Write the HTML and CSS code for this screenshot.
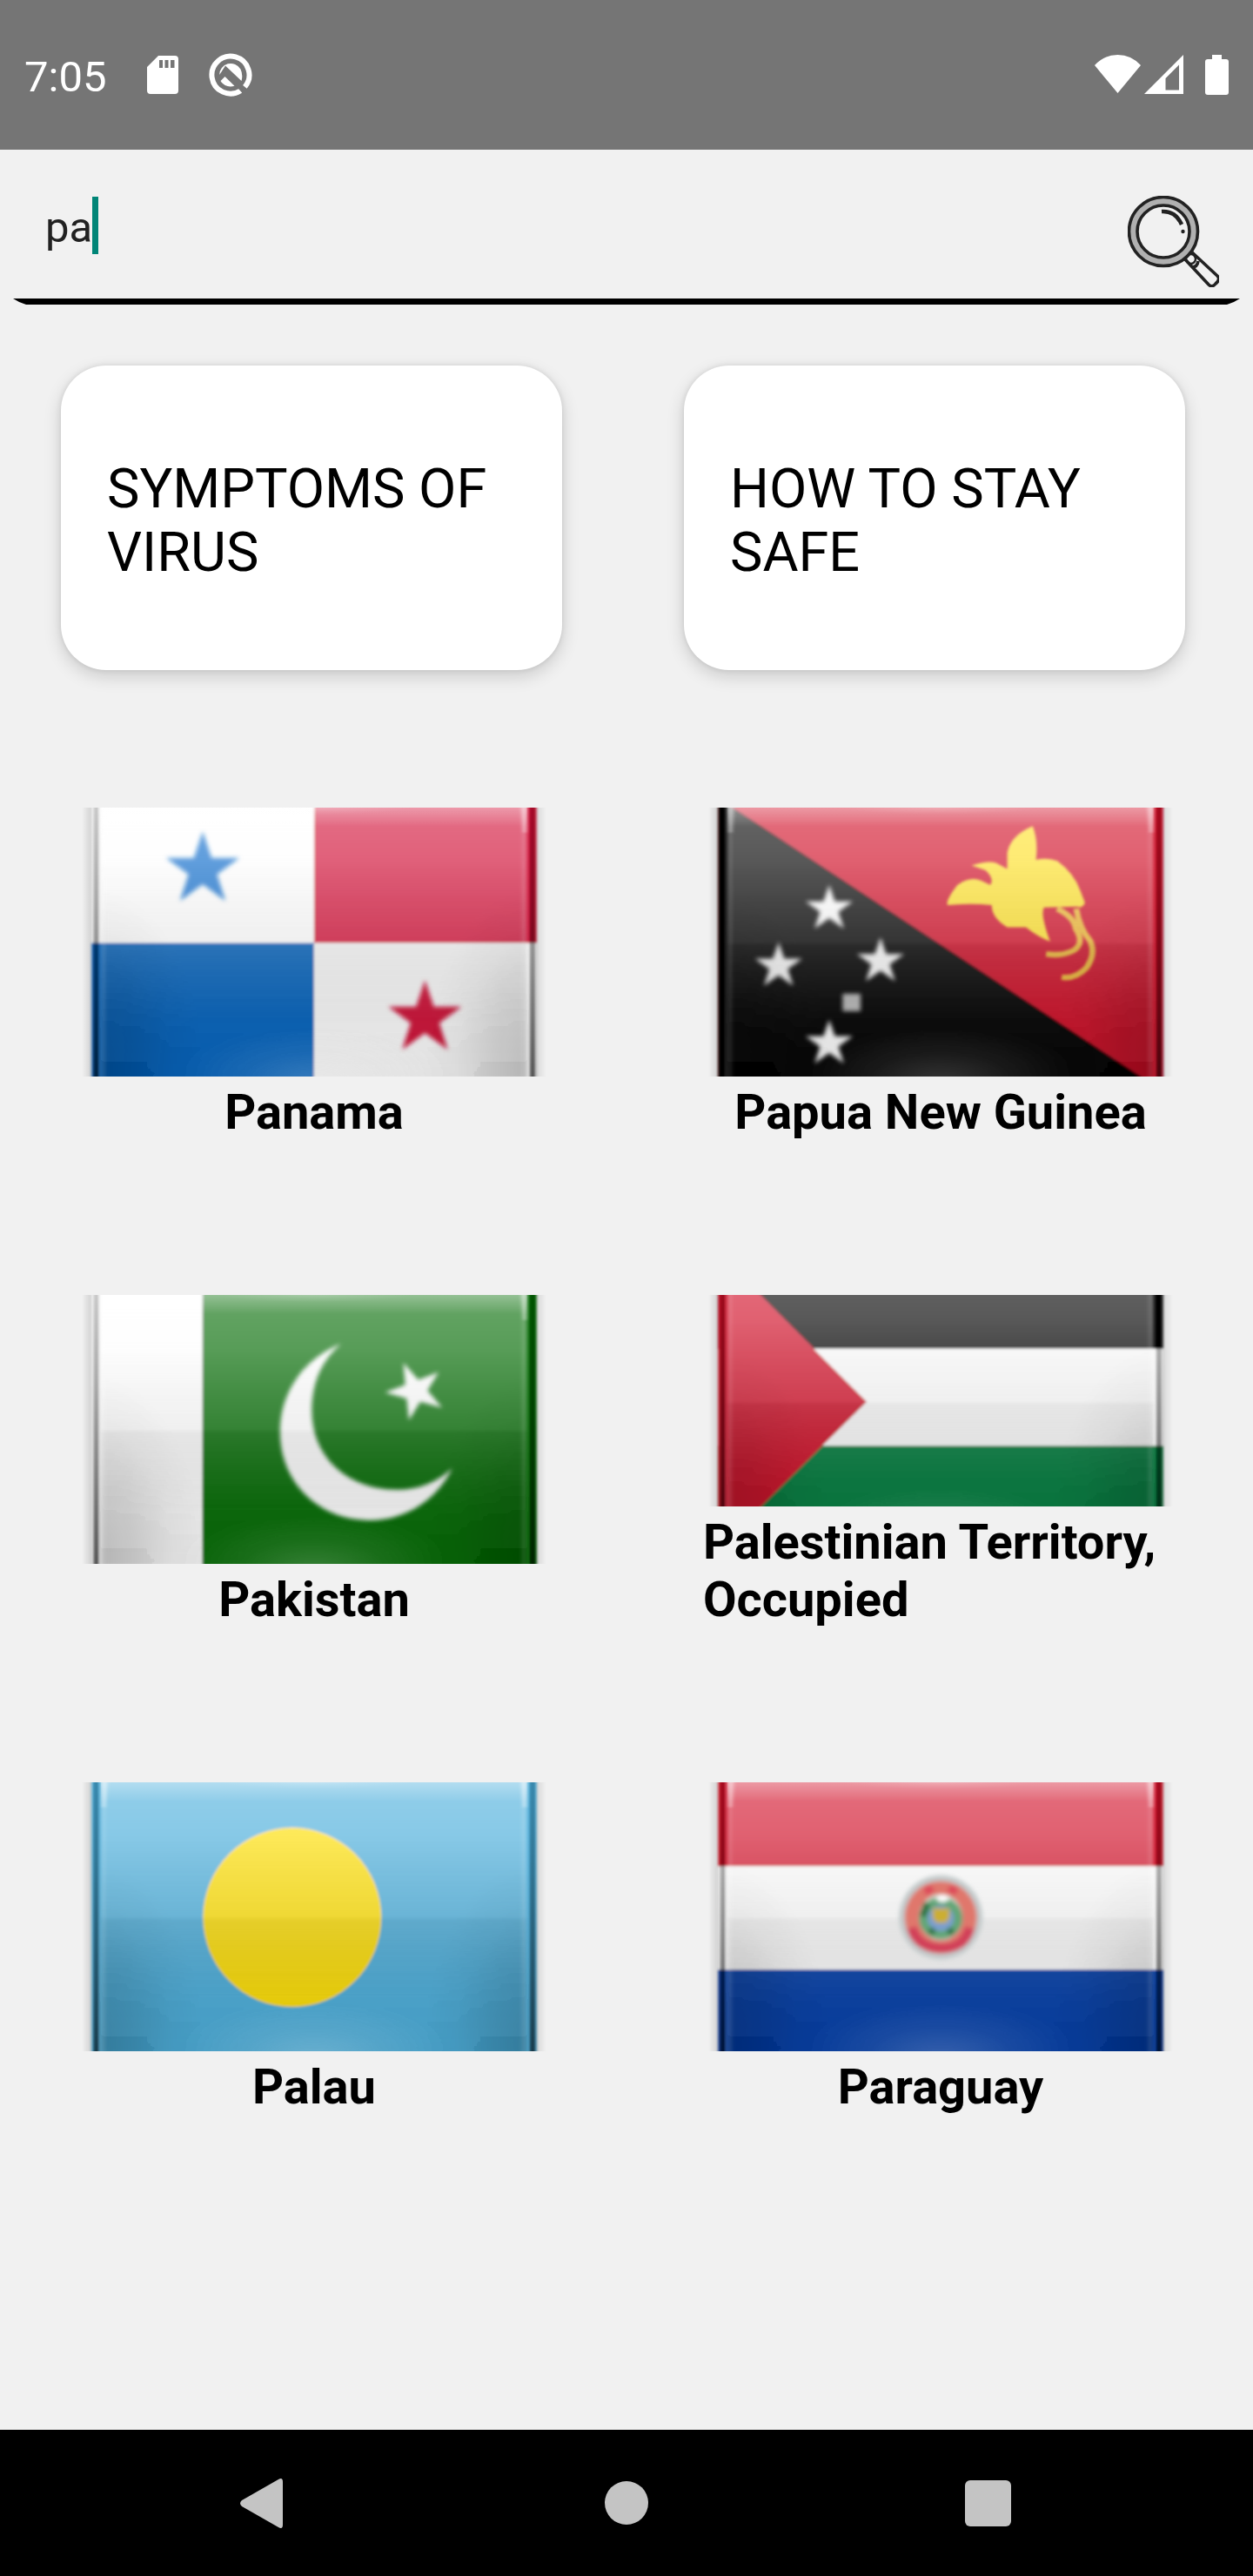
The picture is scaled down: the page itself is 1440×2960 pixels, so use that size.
FILE: index.html
```html
<!DOCTYPE html>
<html lang="en">
<head>
<meta charset="utf-8">
<title>Country search</title>
<link rel="stylesheet" href="styles.css">
</head>
<body>
<svg class="defs" aria-hidden="true">
  <defs>
    <filter id="soft" x="-5%" y="-5%" width="110%" height="110%"><feGaussianBlur stdDeviation="5"/></filter>
    <filter id="soft-edge" x="-5%" y="-5%" width="110%" height="110%"><feGaussianBlur stdDeviation="6 3"/></filter>
    <filter id="soft-small" x="-20%" y="-20%" width="140%" height="140%"><feGaussianBlur stdDeviation="8"/></filter>
    <linearGradient id="gloss" x1="0" y1="84" x2="0" y2="1016" gradientUnits="userSpaceOnUse">
      <stop offset="0" stop-color="#fff" stop-opacity=".4"/>
      <stop offset=".2" stop-color="#fafafa" stop-opacity=".35"/>
      <stop offset=".495" stop-color="#c7c7c7" stop-opacity=".267"/>
      <stop offset=".51" stop-color="#a0a0a0" stop-opacity=".263"/>
      <stop offset=".8" stop-color="#505050" stop-opacity=".15"/>
      <stop offset="1" stop-color="#232323" stop-opacity=".13"/>
    </linearGradient>
    <linearGradient id="top-shine" x1="0" y1="0" x2="0" y2="1">
      <stop offset="0" stop-color="#fff" stop-opacity=".3"/>
      <stop offset="1" stop-color="#fff" stop-opacity="0"/>
    </linearGradient>
    <linearGradient id="edge-dark" x1="0" y1="0" x2="0" y2="1">
      <stop offset="0" stop-color="#000" stop-opacity=".22"/>
      <stop offset=".35" stop-color="#000" stop-opacity=".4"/>
      <stop offset="1" stop-color="#000" stop-opacity=".85"/>
    </linearGradient>
    <linearGradient id="halo-l"><stop offset="0" stop-color="#000" stop-opacity="0"/><stop offset="1" stop-color="#000" stop-opacity=".13"/></linearGradient>
    <linearGradient id="halo-r"><stop offset="0" stop-color="#000" stop-opacity=".1"/><stop offset="1" stop-color="#000" stop-opacity="0"/></linearGradient>
    <radialGradient id="corner">
      <stop offset="0" stop-color="#000" stop-opacity=".19"/>
      <stop offset=".35" stop-color="#000" stop-opacity=".12"/>
      <stop offset=".7" stop-color="#000" stop-opacity=".035"/>
      <stop offset="1" stop-color="#000" stop-opacity="0"/>
    </radialGradient>
    <radialGradient id="glow">
      <stop offset="0" stop-color="#fff" stop-opacity=".2"/>
      <stop offset=".5" stop-color="#fff" stop-opacity=".08"/>
      <stop offset="1" stop-color="#fff" stop-opacity="0"/>
    </radialGradient>
    <clipPath id="inner"><rect x="98" y="-100" width="1374" height="1300"/></clipPath>
    <path id="star" d="M0-100 23-31 95-31 37 12 59 81 0 38-59 81-37 12-95-31-23-31Z"/>
    <g id="halo">
      <rect x="38" y="-20" width="32" height="1140" fill="url(#halo-l)"/>
      <rect x="1500" y="-20" width="33" height="1140" fill="url(#halo-r)"/>
    </g>
    <g id="shade">
      <g filter="url(#soft-edge)">
        <g clip-path="url(#inner)">
          <rect x="98" y="40" width="1374" height="1040" fill="url(#gloss)"/>
          <ellipse cx="90" cy="980" rx="340" ry="620" fill="url(#corner)"/>
          <ellipse cx="1480" cy="980" rx="340" ry="620" fill="url(#corner)"/>
          <ellipse cx="785" cy="1030" rx="460" ry="190" fill="url(#glow)"/>
        </g>
      </g>
      <g filter="url(#soft-edge)">
        <rect x="76" y="0" width="17" height="1100" fill="url(#edge-dark)"/>
        <rect x="1480" y="0" width="17" height="1100" fill="url(#edge-dark)"/>
        <rect x="100" y="40" width="14" height="1040" fill="#fff" fill-opacity=".12"/>
        <rect x="1454" y="40" width="14" height="1040" fill="#fff" fill-opacity=".12"/>
      </g>
    </g>
    <g id="shine">
      <rect x="100" y="84" width="1370" height="66" fill="url(#top-shine)"/>
      <ellipse cx="785" cy="82" rx="320" ry="26" fill="url(#glow)"/>
      <g filter="url(#soft-edge)">
        <path d="M100 60h22l-8 110h-10zM1472 60h-22l8 110h10z" fill="#fff" fill-opacity=".45"/>
      </g>
    </g>
  </defs>
</svg>

<header class="status">
  <span class="time">7:05</span>
  <svg class="sd" viewBox="0 0 36 44"><path fill="#fff" fill-rule="evenodd" d="M13 0H32Q36 0 36 4V40Q36 44 32 44H4Q0 44 0 40V13ZM14 5V14H18V5ZM20.500 5V14H24.500V5ZM27 5V14H31.500V5Z"/></svg>
  <svg class="q" viewBox="-25 -25 50 50">
    <path d="M11.500 18.200A21.500 21.500 0 1 1 16.400 13.900" fill="none" stroke="#fff" stroke-width="6"/>
    <path d="M-12.800 0A13 13 0 0 1 11.500-6.500Q14.500 0 12.500 7L-6-10.500Z" fill="#fff"/>
    <path d="M-13 3-6-4.500" stroke="#757575" stroke-width="3"/>
    <path d="M-6.500 2 4.500 12.800Q-6 15.500-11.500 7Z" fill="#fff"/>
    <path d="M5 10 13.500 18.500" stroke="#757575" stroke-width="3"/>
  </svg>
  <span class="spacer"></span>
  <svg class="wifi" viewBox="0 0 53 44"><path fill="#fff" d="M0 12Q11 0 26.500 0T53 12L26.500 44Z"/></svg>
  <svg class="signal" viewBox="0 0 45 45"><path fill="#fff" fill-rule="evenodd" d="M45 0V45H0ZM40 11.500 24.500 27V40.500H40Z"/></svg>
  <svg class="battery" viewBox="0 0 27 46"><path fill="#fff" d="M8 0H19V5H24Q27 5 27 8V43Q27 46 24 46H3Q0 46 0 43V8Q0 5 3 5H8Z"/></svg>
</header>

<main class="app">
  <div class="search">
    <div class="query"><span>pa</span><i class="caret"></i></div>
    <svg class="lens" viewBox="0 0 105 105" fill="none" stroke="#222" stroke-width="3.600">
      <circle cx="41" cy="41" r="35" stroke="#b0b0b0" stroke-width="8"/>
      <circle cx="41" cy="41" r="39.500"/>
      <circle cx="41" cy="41" r="30"/>
      <path d="M39 18Q55 17 62 33" stroke-width="4.500"/>
      <circle cx="63.500" cy="41" r="2.200" fill="#222" stroke="none"/>
      <path d="M65 72 93 102Q97 106 101 101Q107 96 103 92L74 65"/>
      <circle cx="72.500" cy="72.500" r="5.500" stroke-width="2.500"/>
      <path d="M74 82Q80 82 81 75"/>
    </svg>
  </div>
  <div class="underline"></div>

  <section class="cards">
    <article class="card">SYMPTOMS OF VIRUS</article>
    <article class="card">HOW TO STAY SAFE</article>
  </section>

  <section class="countries">
    <figure class="country">
      <svg class="flag" viewBox="38 84 1495 926" preserveAspectRatio="none">
        <use href="#halo"/>
        <g filter="url(#soft)">
          <rect x="70" y="0" width="1431" height="1100" fill="#fff"/>
          <rect x="785" y="0" width="716" height="550" fill="#d20e35"/>
          <rect x="70" y="550" width="715" height="550" fill="#0063c0"/>
        </g>
        <g filter="url(#soft-small)">
          <use href="#star" transform="translate(427 298) scale(1.240 1.320)" fill="#0a6ccc"/>
          <use href="#star" transform="translate(1142 810) scale(1.240 1.320)" fill="#d20e35"/>
        </g>
        <use href="#shade"/><use href="#shine"/>
      </svg>
      <figcaption>Panama</figcaption>
    </figure>

    <figure class="country">
      <svg class="flag" viewBox="38 84 1495 926" preserveAspectRatio="none">
        <use href="#halo"/>
        <g filter="url(#soft)">
          <rect x="70" y="0" width="1431" height="1100" fill="#d20c25"/>
          <path d="M70 0V1100H1570L1430 1010 120 84 70 48Z" fill="#000"/>
        </g>
        <g filter="url(#soft-small)" fill="#fff">
          <use href="#star" transform="translate(427 433) scale(.800 .830)"/>
          <use href="#star" transform="translate(264 630) scale(.800 .830)"/>
          <use href="#star" transform="translate(592 614) scale(.800 .830)"/>
          <use href="#star" transform="translate(427 897) scale(.800 .830)"/>
          <rect x="470" y="725" width="58" height="60" fill="#bbb"/>
        </g>
        <g filter="url(#soft)">
          <path fill="#ffe22b" d="M1082 148Q1100 200 1092 264Q1130 255 1162 268Q1215 310 1235 370L1250 412Q1240 432 1225 425L1118 428Q1105 450 1138 545Q1100 530 1060 496H1000Q950 465 950 420Q880 412 808 420Q800 405 840 350Q880 320 915 335L945 350Q960 330 930 300L885 283Q940 265 965 275L1000 295V240Q1010 180 1082 148Z"/>
          <path fill="none" stroke="#f0b830" stroke-width="19" d="M1160 432Q1215 460 1220 500Q1255 560 1200 582Q1170 595 1125 588M1222 432Q1232 500 1268 545Q1285 590 1255 635Q1220 675 1175 668"/>
        </g>
        <use href="#shade"/><use href="#shine"/>
      </svg>
      <figcaption>Papua New Guinea</figcaption>
    </figure>

    <figure class="country">
      <svg class="flag" viewBox="38 84 1495 926" preserveAspectRatio="none">
        <use href="#halo"/>
        <g filter="url(#soft)">
          <rect x="70" y="0" width="360" height="1100" fill="#fff"/>
          <rect x="426" y="0" width="1075" height="1100" fill="#036b06"/>
        </g>
        <g filter="url(#soft-small)" fill="#fff">
          <path d="M872 252C740 310 676 430 676 555C676 730 800 860 962 860C1090 860 1185 780 1230 680C1175 735 1110 758 1035 754C885 745 780 640 778 485C778 385 810 310 872 252Z"/>
          <use href="#star" transform="translate(1112 415) rotate(-22) scale(.980 1.050)"/>
        </g>
        <use href="#shade"/><use href="#shine"/>
      </svg>
      <figcaption>Pakistan</figcaption>
    </figure>

    <figure class="country">
      <svg class="flag flag-short" viewBox="38 84 1495 729" preserveAspectRatio="none">
        <use href="#halo"/>
        <g filter="url(#soft)">
          <rect x="70" y="0" width="1431" height="900" fill="#fff"/>
          <rect x="70" y="-20" width="1431" height="290" fill="#000"/>
          <rect x="70" y="604" width="1431" height="300" fill="#007c3c"/>
          <path d="M70-60 548 452 70 960Z" fill="#d20c25"/>
        </g>
        <use href="#shade" transform="translate(0 -96)"/>
      </svg>
      <figcaption>Palestinian Territory, Occupied</figcaption>
    </figure>

    <figure class="country">
      <svg class="flag" viewBox="38 84 1495 926" preserveAspectRatio="none">
        <use href="#halo"/>
        <g filter="url(#soft)">
          <rect x="70" y="0" width="1431" height="1100" fill="#48aedc"/>
          <ellipse cx="715" cy="549" rx="287" ry="309" fill="#ffdf05"/>
        </g>
        <use href="#shade"/><use href="#shine"/>
      </svg>
      <figcaption>Palau</figcaption>
    </figure>

    <figure class="country">
      <svg class="flag" viewBox="38 84 1495 926" preserveAspectRatio="none">
        <use href="#halo"/>
        <g filter="url(#soft)">
          <rect x="70" y="0" width="1431" height="1100" fill="#fff"/>
          <rect x="70" y="0" width="1431" height="373" fill="#d20c25"/>
          <rect x="70" y="729" width="1431" height="400" fill="#003caa"/>
        </g>
        <use href="#shade"/>
        <g filter="url(#soft-small)">
          <ellipse cx="786" cy="549" rx="134" ry="145" fill="#c3cacb"/>
          <ellipse cx="786" cy="549" rx="93" ry="102" fill="#d0ddd2" stroke="#e0776c" stroke-width="46"/>
          <path d="M692 585Q710 653 786 655T880 585" fill="none" stroke="#d23f58" stroke-width="32"/>
          <path d="M735 462 760 448M812 448 837 462" stroke="#dd4a5a" stroke-width="26"/>
          <ellipse cx="786" cy="552" rx="56" ry="58" fill="#7a9fd0" stroke="#62a677" stroke-width="28"/>
          <path d="M742 500 728 545M750 590 765 604M825 590 810 604" stroke="#2f7343" stroke-width="22"/>
          <ellipse cx="792" cy="484" rx="20" ry="12" fill="#fff"/>
          <path d="M760 518H814V552L802 568H772L760 552Z" fill="#ccae30"/>
        </g>
        <use href="#shine"/>
      </svg>
      <figcaption>Paraguay</figcaption>
    </figure>
  </section>
</main>

<nav class="nav">
  <svg class="back" viewBox="0 0 49 57"><path fill="#c4c4c4" d="M44 1Q49-2 49 4V53Q49 59 44 56L2 32Q-2 28.500 2 25Z"/></svg>
  <span class="home"></span>
  <span class="recent"></span>
</nav>
</body>
</html>
```
FILE: styles.css
```css
* { box-sizing: border-box; }

body {
  margin: 0;
  width: 1440px;
  height: 2960px;
  display: flex;
  flex-direction: column;
  background: #f1f1f1;
  color: #000;
  font-family: Roboto, "Liberation Sans", sans-serif;
}

svg { display: block; flex: none; }
.defs { position: absolute; width: 0; height: 0; }

/* Status bar */
.status {
  height: 172px;
  flex: none;
  padding: 60px 28px 0;
  display: flex;
  align-items: flex-start;
  background: #757575;
  color: #fff;
}
.time { width: 141px; font-size: 49px; line-height: 57px; }
.sd { width: 36px; height: 44px; margin-top: 4px; }
.q { width: 50px; height: 50px; margin: 1px 0 0 35px; }
.spacer { flex: 1; }
.wifi { width: 53px; height: 44px; margin: 3px 4px 0 0; }
.signal { width: 45px; height: 45px; margin: 3px 25px 0 0; }
.battery { width: 27px; height: 46px; margin-top: 3px; }

/* Search field */
.app { flex: 1; }
.search {
  height: 171px;
  padding: 53px 39px 0 52px;
  display: flex;
  justify-content: space-between;
}
.query {
  display: flex;
  height: 66px;
  color: #212121;
  font-size: 49px;
  line-height: 74px;
}
.caret { width: 7px; height: 66px; margin-top: 1px; background: #008577; }
.lens { width: 105px; height: 105px; }
.underline {
  height: 7px;
  margin: 0 15px;
  background: #000;
  clip-path: polygon(0 0, 100% 0, calc(100% - 7px) 4px, calc(100% - 15px) 100%, 15px 100%, 7px 4px);
}

/* Info cards */
.cards {
  display: grid;
  grid-template-columns: 576px 576px;
  column-gap: 140px;
  padding: 70px 0 0 70px;
}
.card {
  height: 350px;
  padding: 105px 52px 0 53px;
  border-radius: 52px;
  background: #fff;
  font-size: 63px;
  line-height: 73px;
  box-shadow: 0 7px 20px rgba(0, 0, 0, .16), 0 0 6px rgba(0, 0, 0, .1);
}

/* Country grid */
.countries {
  display: grid;
  grid-template-columns: 546px 546px;
  grid-auto-rows: 383px;
  gap: 177px 174px;
  padding: 158px 0 0 88px;
}
.country {
  margin: 0;
  display: flex;
  flex-direction: column;
  align-items: center;
  gap: 8px;
  font-size: 56px;
  font-weight: 700;
  line-height: 66px;
}
.flag { width: 534px; height: 309px; }
.flag-short { height: 243px; }

/* Navigation bar */
.nav {
  height: 168px;
  flex: none;
  padding: 0 278px 0 276px;
  display: flex;
  align-items: center;
  justify-content: space-between;
  background: #000;
}
.back { width: 49px; height: 57px; }
.home { width: 50px; height: 50px; margin-left: 6px; border-radius: 50%; background: #c4c4c4; }
.recent { width: 53px; height: 53px; border-radius: 6px; background: #c4c4c4; }
```
